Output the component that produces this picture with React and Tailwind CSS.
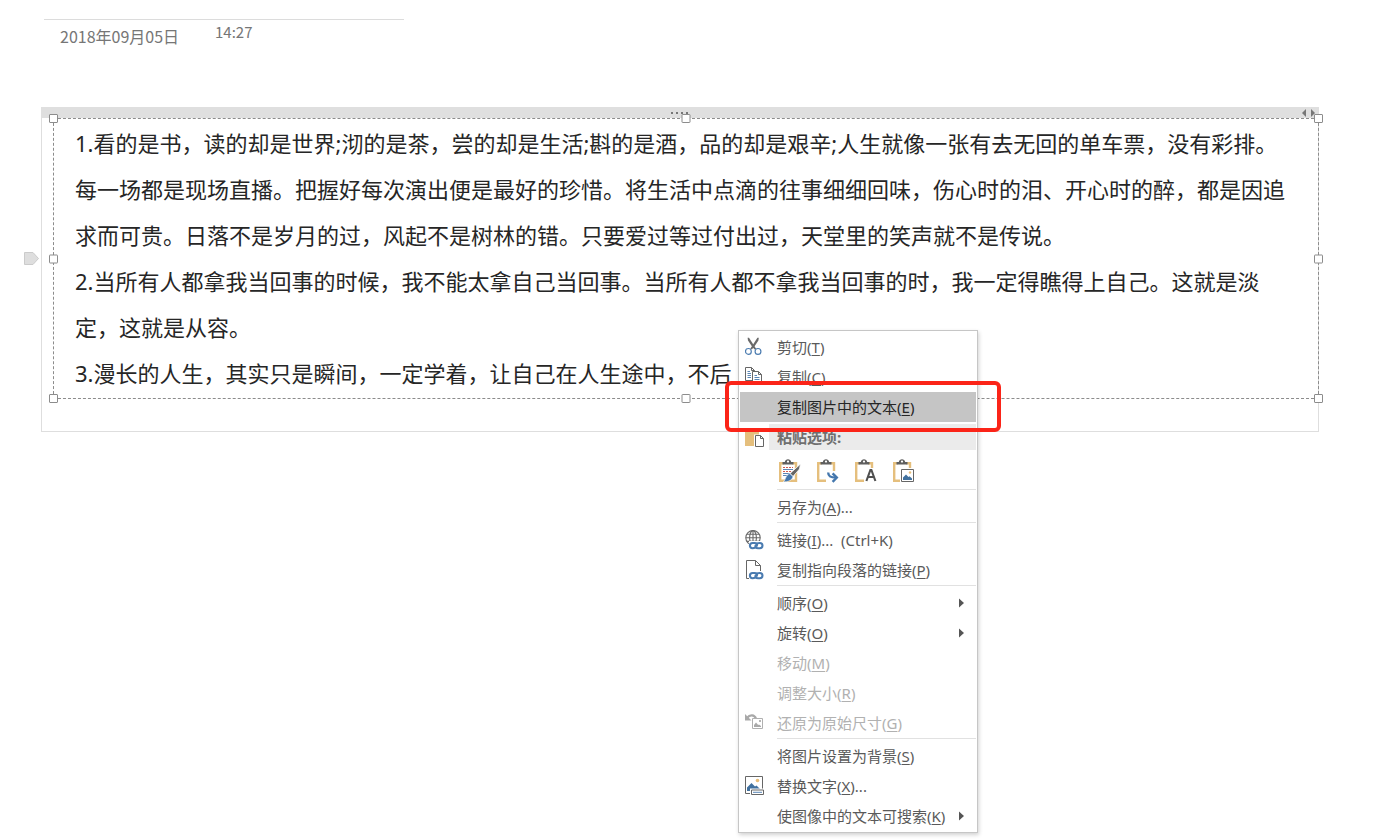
import React from 'react';

// Lines of the picture that is selected on the note page
const noteLines = [
  '1.看的是书，读的却是世界;沏的是茶，尝的却是生活;斟的是酒，品的却是艰辛;人生就像一张有去无回的单车票，没有彩排。',
  '每一场都是现场直播。把握好每次演出便是最好的珍惜。将生活中点滴的往事细细回味，伤心时的泪、开心时的醉，都是因追',
  '求而可贵。日落不是岁月的过，风起不是树林的错。只要爱过等过付出过，天堂里的笑声就不是传说。',
  '2.当所有人都拿我当回事的时候，我不能太拿自己当回事。当所有人都不拿我当回事的时，我一定得瞧得上自己。这就是淡',
  '定，这就是从容。',
  '3.漫长的人生，其实只是瞬间，一定学着，让自己在人生途中，不后',
];

const handles = [
  '-left-[5px] -top-[5px]',
  'left-1/2 -translate-x-1/2 -top-[5px]',
  '-right-[5px] -top-[5px]',
  '-left-[5px] top-1/2 -translate-y-1/2',
  '-right-[5px] top-1/2 -translate-y-1/2',
  '-left-[5px] -bottom-[5px]',
  'left-1/2 -translate-x-1/2 -bottom-[5px]',
  '-right-[5px] -bottom-[5px]',
];

/* ---------- Icons ---------- */

function CutIcon() {
  return (
    <svg width="20" height="20" viewBox="0 0 20 20" fill="none">
      <path d="M2.6 .8 L4 .8 L8.8 8.2 L11.2 11.8 L9.6 12.4 L7 9.4 L3 3.6 Z" fill="#6a6a6a" />
      <path d="M13.8 .8 L12.4 .8 L7.6 8.2 L5.2 11.8 L6.8 12.4 L9.4 9.4 L13.4 3.6 Z" fill="#6a6a6a" />
      <circle cx="3.4" cy="14.4" r="2.9" stroke="#4d7db1" strokeWidth="1.2" />
      <circle cx="13" cy="14.4" r="2.9" stroke="#4d7db1" strokeWidth="1.2" />
    </svg>
  );
}

function CopyIcon() {
  return (
    <svg width="20" height="20" viewBox="0 0 20 20" fill="none">
      <path d="M.5 .5 H6.5 L9.5 3.5 V13.5 H.5 Z" fill="#fff" stroke="#666" />
      <path d="M6.5 .5 V3.5 H9.5" stroke="#666" />
      <path d="M2.5 4.5 H5 M2.5 6.5 H6 M2.5 8.5 H6 M2.5 10.5 H6" stroke="#5b86b5" />
      <path d="M7.5 4.5 H13.5 L16.5 7.5 V17.5 H7.5 Z" fill="#fff" stroke="#666" />
      <path d="M13.5 4.5 V7.5 H16.5" stroke="#666" />
      <path d="M9.5 8.5 H12 M9.5 10.5 H14.5 M9.5 12.5 H14.5 M9.5 14.5 H14.5" stroke="#5b86b5" />
    </svg>
  );
}

function PasteIcon() {
  return (
    <svg width="20" height="22" viewBox="0 0 20 22" fill="none">
      <path d="M0 4 H14 V20 H0 Z" fill="#e5bf7d" />
      <path d="M4 2 H10 V5 H4 Z" fill="#5f5f5f" />
      <path d="M9 8.5 H15 L19.5 13 V22 H9 Z" fill="#fff" />
      <path d="M10.5 9.5 H15.5 L18.5 12.5 V20.5 H10.5 Z" fill="#fff" stroke="#666" />
      <path d="M15.5 9.5 V12.5 H18.5" stroke="#666" />
    </svg>
  );
}

function Chain() {
  return (
    <g stroke="#4a7bb0" strokeWidth="2.1" strokeLinecap="round">
      <path d="M10.2 17.6 C9.4 18 8.6 18.2 7.6 18.2 C4 18.2 4 13 7.6 13 H9.6 C11.6 13 12.6 14.4 11.8 15.8" />
      <path d="M12.2 13.4 C12.9 13 13.8 13 14.8 13 C18.4 13 18.4 18.2 14.8 18.2 H13 C10.8 18.2 10 16.8 10.6 15.4" />
    </g>
  );
}

function WebLinkIcon() {
  return (
    <svg width="20" height="20" viewBox="0 0 20 20" fill="none">
      <g stroke="#6a6a6a" strokeWidth="1.1">
        <circle cx="8" cy="7.8" r="7.2" />
        <ellipse cx="8" cy="7.8" rx="3.4" ry="7.2" />
        <path d="M8 .6 V15 M.8 7.8 H15.2 M1.8 4.2 H14.2 M1.8 11.4 H14.2" />
      </g>
      <path d="M4 11 H18 V20 H4 Z" fill="#fff" />
      <Chain />
    </svg>
  );
}

function PageLinkIcon() {
  return (
    <svg width="20" height="20" viewBox="0 0 20 20" fill="none">
      <path d="M4 18.5 H1.5 V.5 H10.5 L15.5 5.5 V11 M10.5 .5 V5.5 H15.5" stroke="#666" />
      <Chain />
    </svg>
  );
}

function RestoreIcon() {
  return (
    <svg width="20" height="20" viewBox="0 0 20 20" fill="none">
      <path d="M2 5 C5 1 9.5 1.6 11 5.6" stroke="#a9a9a9" strokeWidth="2.2" />
      <path d="M0 1 V7.5 H6.5 Z" fill="#a9a9a9" />
      <path d="M7.5 5.5 H17.5 V15.5 H7.5 Z" fill="#fff" stroke="#b0b0b0" />
      <path d="M9 14 V12 L11 9.5 L13.2 12 L14 11.4 L16 13 V14 Z" fill="#a9a9a9" />
      <path d="M14 7 H16 V9 H14 Z" fill="#b5b5b5" />
    </svg>
  );
}

function AltTextIcon() {
  return (
    <svg width="20" height="20" viewBox="0 0 20 20" fill="none">
      <path d="M.5 .5 H17.5 V17.5 H.5 Z" fill="#fff" stroke="#666" />
      <path d="M2 15 V11.5 L6.5 7 L10 10.5 L11.5 9.5 L15.5 13.5 V15 Z" fill="#41719f" />
      <circle cx="12.5" cy="4.5" r="1.8" fill="#e8bd79" />
      <path d="M5 12.5 H20 V20 H5 Z" fill="#fff" />
      <path d="M6.5 14 H18.5 V18.5 H6.5 Z" fill="#fff" stroke="#666" />
      <path d="M8 16.3 H17" stroke="#5b86b5" />
    </svg>
  );
}

function Clipboard({ children }) {
  return (
    <svg width="22" height="24" viewBox="0 0 22 24" fill="none">
      <path d="M5 4.2 H1.2 V21.8 H17 V4.2 H13" stroke="#e5bf7d" strokeWidth="2.4" />
      <path d="M3.5 5.5 V3 H5.8 C6.4 -.6 11.6 -.6 12.2 3 H14.5 V5.5 Z" fill="#5f5f5f" />
      <circle cx="9" cy="2.6" r="1.1" fill="#fff" />
      {children}
    </svg>
  );
}

function KeepSourceIcon() {
  return (
    <Clipboard>
      <path d="M4 8.5 H14 M4 12.5 H14" stroke="#cf5b50" strokeDasharray="2 1" />
      <path d="M4 10.5 H14 M4 14.5 H11 M4 16.5 H8" stroke="#5b86b5" />
      <path d="M21.5 5 L20.5 10 L14 17.5 L11 14.5 Z" fill="#666" stroke="#fff" strokeWidth=".8" />
      <path d="M10.8 14.6 L14 17.6 C13.4 21.2 9 23.2 4.2 22.8 C6.8 21.2 6.6 15.4 10.8 14.6 Z" fill="#4477ad" stroke="#fff" strokeWidth=".6" />
    </Clipboard>
  );
}

function MergeIcon() {
  return (
    <Clipboard>
      <path d="M9 12 H22 V24 H9 Z" fill="#fff" />
      <path d="M11.2 13.6 C11.2 17.4 13.4 18.6 19 18.6" stroke="#4477ad" strokeWidth="2.4" />
      <path d="M15.6 14.4 L19.8 18.6 L15.6 22.8" stroke="#4477ad" strokeWidth="2.4" />
    </Clipboard>
  );
}

function TextOnlyIcon() {
  return (
    <Clipboard>
      <path d="M9 9 H22 V24 H9 Z" fill="#fff" />
      <path d="M11.4 22 L15.4 11 H16.4 L20.4 22 M13 18 H18.8" stroke="#505050" strokeWidth="2.1" />
    </Clipboard>
  );
}

function PastePictureIcon() {
  return (
    <Clipboard>
      <path d="M7 9 H22 V24 H7 Z" fill="#fff" />
      <path d="M8.5 10.5 H20.5 V22.5 H8.5 Z" fill="#fff" stroke="#666" />
      <path d="M10 21 V18.5 L13 15.5 L15.5 18 L16.5 17.2 L19 19.5 V21 Z" fill="#41719f" />
      <circle cx="17" cy="13.5" r="1.2" fill="#e8bd79" />
    </Clipboard>
  );
}

/* ---------- Menu parts ---------- */

function MenuItem({ icon, label, shortcut, after = '', submenu, disabled, active, children }) {
  return (
    <li className="relative px-px">
      <button
        type="button"
        disabled={disabled}
        className={
          'flex h-[30px] w-full items-center pr-3 pl-[5px] text-left whitespace-pre ' +
          (active ? 'bg-[#c5c5c5] text-[#262626]' : disabled ? 'text-[#b1b1b1]' : 'text-[#5a5a5a]')
        }
      >
        <span className="w-8 shrink-0">{icon}</span>
        <span className="grow">
          {label}(<u className="underline-offset-2">{shortcut}</u>){after}
        </span>
        {submenu && (
          <svg width="5" height="10" viewBox="0 0 5 10">
            <path d="M0 .5 L5 5 L0 9.5 Z" fill="#555" />
          </svg>
        )}
      </button>
      {children}
    </li>
  );
}

function Separator() {
  return <li role="separator" className="mr-px ml-[38px] h-[3px] border-t border-[#e1e1e1]" />;
}

function ContextMenu() {
  return (
    <ul className="absolute top-[330px] left-[738px] w-60 border border-[#c6c6c6] bg-white py-px text-[15px] leading-5 shadow-[1px_2px_4px_rgba(0,0,0,0.18)]">
      <MenuItem icon={<CutIcon />} label="剪切" shortcut="T" />
      <MenuItem icon={<CopyIcon />} label="复制" shortcut="C" />
      <MenuItem label="复制图片中的文本" shortcut="E" active>
        {/* Red highlight frame */}
        <div className="pointer-events-none absolute -top-[11px] -right-[24px] -bottom-[10px] -left-[14px] z-10 rounded-md border-4 border-[#fb2418]" />
      </MenuItem>
      <li className="flex h-[30px] items-center pr-px pl-1.5">
        <span className="w-6 shrink-0">
          <PasteIcon />
        </span>
        <span className="h-[26px] grow bg-[#ebebeb] pl-2 leading-[26px] font-bold text-[#6f6f6f]">粘贴选项:</span>
      </li>
      <li className="flex h-[37px] items-center gap-4 pl-10">
        <button type="button" aria-label="保留源格式"><KeepSourceIcon /></button>
        <button type="button" aria-label="合并格式"><MergeIcon /></button>
        <button type="button" aria-label="只保留文本"><TextOnlyIcon /></button>
        <button type="button" aria-label="图片"><PastePictureIcon /></button>
      </li>
      <Separator />
      <MenuItem label="另存为" shortcut="A" after="..." />
      <Separator />
      <MenuItem icon={<WebLinkIcon />} label="链接" shortcut="I" after="...  (Ctrl+K)" />
      <MenuItem icon={<PageLinkIcon />} label="复制指向段落的链接" shortcut="P" />
      <Separator />
      <MenuItem label="顺序" shortcut="O" submenu />
      <MenuItem label="旋转" shortcut="O" submenu />
      <MenuItem label="移动" shortcut="M" disabled />
      <MenuItem label="调整大小" shortcut="R" disabled />
      <MenuItem icon={<RestoreIcon />} label="还原为原始尺寸" shortcut="G" disabled />
      <Separator />
      <MenuItem label="将图片设置为背景" shortcut="S" />
      <MenuItem icon={<AltTextIcon />} label="替换文字" shortcut="X" after="..." />
      <MenuItem label="使图像中的文本可搜索" shortcut="K" submenu />
    </ul>
  );
}

export default function App() {
  return (
    <div className="relative min-h-screen overflow-hidden bg-white pt-[19px] font-['Noto_Sans','Noto_Sans_CJK_SC',sans-serif]">
      {/* Page date and time */}
      <header className="ml-11 flex h-[88px] w-[360px] items-start gap-9 border-t border-[#dcdcdc] pl-4 font-['Noto_Sans_CJK_SC',sans-serif] text-[#767676]">
        <span className="pt-1 text-base">2018年09月05日</span>
        <span className="text-[15px] leading-6">14:27</span>
      </header>

      {/* Note container */}
      <main className="relative mr-[61px] ml-[41px] border border-t-0 border-[#dedede] pb-8">
        <svg className="absolute top-[145px] -left-[18px]" width="15" height="13" viewBox="0 0 15 13">
          <path d="M.5 .5 H9 L14.5 6.5 L9 12.5 H.5 Z" fill="#dedede" stroke="#cbcbcb" />
        </svg>

        <div className="relative -mx-px flex h-[11px] items-center justify-end bg-[#dfdfdf] pr-1">
          <svg className="absolute left-1/2 -ml-[10px]" width="20" height="4" viewBox="0 0 20 4">
            <path d="M1 1 H3 V3 H1 Z M6 1 H8 V3 H6 Z M11 1 H13 V3 H11 Z M16 1 H18 V3 H16 Z" fill="#777" />
          </svg>
          <svg width="13" height="8" viewBox="0 0 13 8">
            <path d="M4 0 V8 L0 4 Z M9 0 V8 L13 4 Z" fill="#777" />
          </svg>
        </div>

        <div className="relative -mr-px ml-[11px] border border-dashed border-[#8c8c8c] pt-px pb-0.5 pl-[21px] text-[22px] leading-[46px] whitespace-nowrap text-[#262626]">
          {noteLines.map((line) => (
            <p key={line}>{line}</p>
          ))}
          {handles.map((place) => (
            <span key={place} className={'absolute size-[9px] rounded-[1px] border border-[#8c8c8c] bg-white ' + place} />
          ))}
        </div>
      </main>

      <ContextMenu />
    </div>
  );
}
